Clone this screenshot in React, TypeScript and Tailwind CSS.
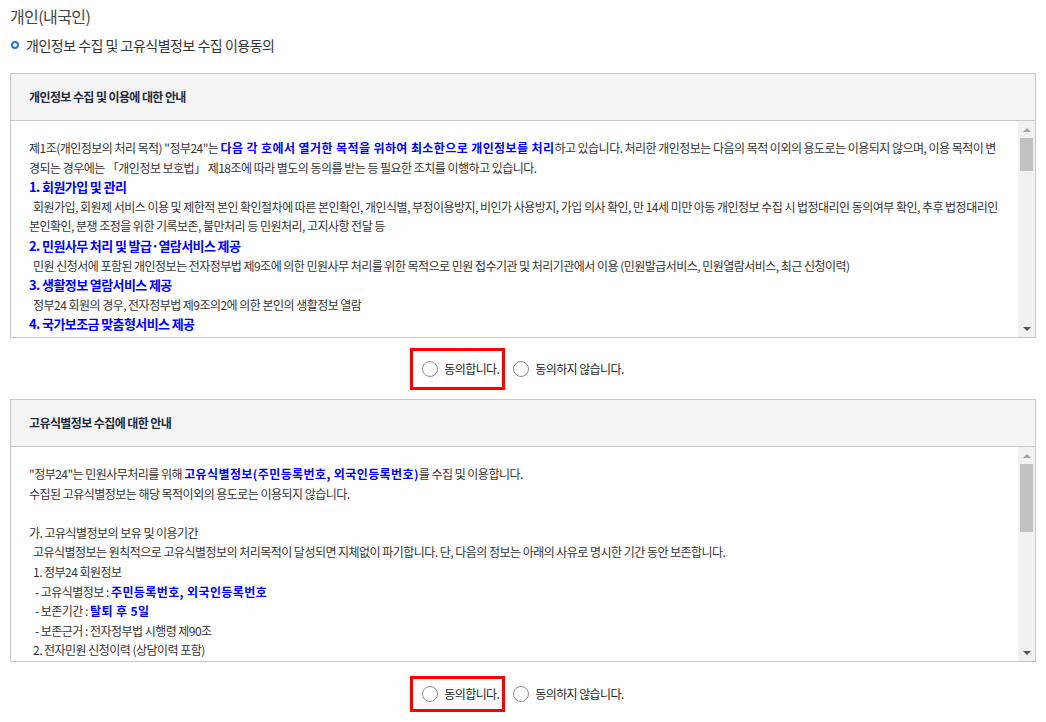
import React from 'react';

const FONT = "font-['Noto_Sans_CJK_KR',sans-serif]";

const B = ({ children }: { children: React.ReactNode }) => (
    <b className="font-bold text-[#0000ff] tracking-[0.4px]">{children}</b>
);

const Heading = ({ children }: { children: React.ReactNode }) => (
    <p className="text-[13px] font-bold text-[#0000ff] tracking-[-0.6px]">{children}</p>
);

const FakeScrollbar = ({ thumbHeight }: { thumbHeight: string }) => (
    <div className="w-[17px] shrink-0 bg-[#f1f1f1] flex flex-col items-center">
        <div className="h-[17px] flex items-center justify-center">
            <div className="w-0 h-0 border-l-[4px] border-r-[4px] border-b-[4px] border-l-transparent border-r-transparent border-b-[#a3a3a3]" />
        </div>
        <div className="flex-1 w-full px-[2px]">
            <div className={`w-full bg-[#c1c1c1] ${thumbHeight}`} />
        </div>
        <div className="h-[17px] flex items-center justify-center">
            <div className="w-0 h-0 border-l-[4px] border-r-[4px] border-t-[4px] border-l-transparent border-r-transparent border-t-[#505050]" />
        </div>
    </div>
);

const Radio = () => (
    <span className="w-[16px] h-[16px] rounded-full border border-[#8f8f8f] bg-white shrink-0" />
);

const AgreeRow = ({ boxH }: { boxH: string }) => (
    <div className="flex justify-center items-center pr-[12px]">
        <div className="flex items-center text-[12px] text-[#222] tracking-[-0.6px]">
            <label className={`flex items-center gap-[6px] border-[3px] border-[#ff0000] pl-[9px] pr-[3px] ${boxH}`}>
                <Radio />
                <span>동의합니다.</span>
            </label>
            <label className="flex items-center gap-[6px] ml-[8px]">
                <Radio />
                <span>동의하지 않습니다.</span>
            </label>
        </div>
    </div>
);

const NoticeBox = ({ title, children, height, thumbHeight }: {
    title: string;
    children: React.ReactNode;
    height: string;
    thumbHeight: string;
}) => (
    <div className="mx-[10px] border border-[#c8c8c8] bg-white">
        <div className="h-[47px] bg-[#f4f4f4] border-b border-[#c8c8c8] flex items-center px-[18px]">
            <h3 className="text-[12px] font-bold text-[#1c2a3a] tracking-[-0.6px]">{title}</h3>
        </div>
        <div className={`flex ${height}`}>
            <div className="flex-1 overflow-hidden pt-[17px] pl-[18px] pr-[15px] text-[12px] leading-[19.6px] text-[#333] tracking-[-0.53px]">
                {children}
            </div>
            <FakeScrollbar thumbHeight={thumbHeight} />
        </div>
    </div>
);

export default function App() {
    return (
        <div className={`w-[1046px] h-[722px] bg-white overflow-hidden ${FONT}`}>
            <div className="px-[10px] pt-[4px]">
                <h1 className="text-[16px] text-[#444] tracking-[-0.6px] leading-[24px]">개인(내국인)</h1>
                <h2 className="mt-[8px] flex items-center gap-[7px] text-[14px] text-[#333] tracking-[-0.5px] leading-[18px]">
                    <span className="w-[8px] h-[8px] rounded-full border-[2px] border-[#1f7ad1] ml-[1px]" />
                    개인정보 수집 및 고유식별정보 수집 이용동의
                </h2>
            </div>

            <div className="mt-[19px]">
                <NoticeBox title="개인정보 수집 및 이용에 대한 안내" height="h-[216px]" thumbHeight="h-[33px]">
                    <p>
                        제1조(개인정보의 처리 목적) "정부24"는 <B>다음 각 호에서 열거한 목적을 위하여 최소한으로 개인정보를 처리</B>하고 있습니다. 처리한 개인정보는 다음의 목적 이외의 용도로는 이용되지 않으며, 이용 목적이 변경되는 경우에는 「개인정보 보호법」 제18조에 따라 별도의 동의를 받는 등 필요한 조치를 이행하고 있습니다.
                    </p>
                    <Heading>1. 회원가입 및 관리</Heading>
                    <p className="indent-[4px]">
                        회원가입, 회원제 서비스 이용 및 제한적 본인 확인절차에 따른 본인확인, 개인식별, 부정이용방지, 비인가 사용방지, 가입 의사 확인, 만 14세 미만 아동 개인정보 수집 시 법정대리인 동의여부 확인, 추후 법정대리인 본인확인, 분쟁 조정을 위한 기록보존, 불만처리 등 민원처리, 고지사항 전달 등
                    </p>
                    <Heading>2. 민원사무 처리 및 발급·열람서비스 제공</Heading>
                    <p className="indent-[4px]">
                        민원 신청서에 포함된 개인정보는 전자정부법 제9조에 의한 민원사무 처리를 위한 목적으로 민원 접수기관 및 처리기관에서 이용 (민원발급서비스, 민원열람서비스, 최근 신청이력)
                    </p>
                    <Heading>3. 생활정보 열람서비스 제공</Heading>
                    <p className="indent-[4px]">정부24 회원의 경우, 전자정부법 제9조의2에 의한 본인의 생활정보 열람</p>
                    <Heading>4. 국가보조금 맞춤형서비스 제공</Heading>
                </NoticeBox>
            </div>

            <div className="h-[61px] flex flex-col justify-center">
                <AgreeRow boxH="h-[42px]" />
            </div>

            <NoticeBox title="고유식별정보 수집에 대한 안내" height="h-[214px]" thumbHeight="h-[68px]">
                <p>"정부24"는 민원사무처리를 위해 <B>고유식별정보(주민등록번호, 외국인등록번호)</B>를 수집 및 이용합니다.</p>
                <p>수집된 고유식별정보는 해당 목적이외의 용도로는 이용되지 않습니다.</p>
                <p>&nbsp;</p>
                <p>가. 고유식별정보의 보유 및 이용기간</p>
                <p className="indent-[4px]">고유식별정보는 원칙적으로 고유식별정보의 처리목적이 달성되면 지체없이 파기합니다. 단, 다음의 정보는 아래의 사유로 명시한 기간 동안 보존합니다.</p>
                <p className="indent-[4px]">1. 정부24 회원정보</p>
                <p className="indent-[6px]">- 고유식별정보 : <B>주민등록번호, 외국인등록번호</B></p>
                <p className="indent-[6px]">- 보존기간 : <B>탈퇴 후 5일</B></p>
                <p className="indent-[6px]">- 보존근거 : 전자정부법 시행령 제90조</p>
                <p className="indent-[4px]">2. 전자민원 신청이력 (상담이력 포함)</p>
                <p className="indent-[6px]">- 고유식별정보 : <B>주민등록번호, 외국인등록번호</B></p>
            </NoticeBox>

            <div className="h-[50px] pt-[14px]">
                <AgreeRow boxH="h-[36px]" />
            </div>
        </div>
    );
}
